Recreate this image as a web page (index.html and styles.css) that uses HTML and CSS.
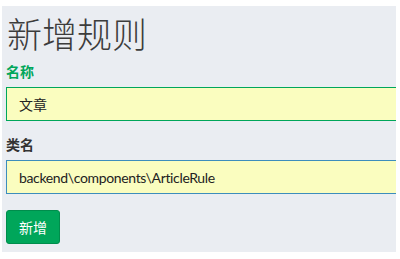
FILE: index.html
```html
<!DOCTYPE html>
<html lang="zh">
<head>
<meta charset="utf-8">
<title>新增规则</title>
<link rel="stylesheet" href="styles.css">
</head>
<body>
<div class="panel">
  <h1 class="title">新增规则</h1>
  <form class="form">
    <div class="group group-success">
      <label class="label">名称</label>
      <div class="input">文章</div>
    </div>
    <div class="group group-focus">
      <label class="label">类名</label>
      <div class="input input-latin">backend\components\ArticleRule</div>
    </div>
    <div class="actions">
      <button type="button" class="btn">新增</button>
    </div>
  </form>
</div>
</body>
</html>
```

FILE: styles.css
```css
html, body {
  margin: 0;
  padding: 0;
  background: #ffffff;
}
body {
  font-family: Lato, "Noto Sans CJK SC", sans-serif;
  font-size: 14px;
  color: #333;
}
.panel {
  margin: 6px 4px 0 2px;
  height: 246px;
  box-sizing: border-box;
  background: #eaedf2;
  padding: 0 0 0 4px;
  overflow: hidden;
  display: flex;
  flex-direction: column;
}
.title {
  margin: 7px 0 0 1px;
  font-family: "Noto Sans CJK SC", sans-serif;
  font-weight: 300;
  font-size: 35px;
  line-height: 40px;
  color: #3c3c3c;
}
.form {
  display: flex;
  flex-direction: column;
  margin-top: 8px;
}
.group {
  display: flex;
  flex-direction: column;
  margin-bottom: 13px;
}
.label {
  font-family: "Noto Sans CJK SC", sans-serif;
  font-weight: 700;
  font-size: 14px;
  line-height: 20px;
  margin-bottom: 6px;
  color: #333;
}
.group-success .label {
  color: #00a65a;
}
.input {
  height: 34px;
  box-sizing: border-box;
  width: 400px;
  border: 1px solid #00a65a;
  border-right: none;
  background: #fafdbf;
  padding: 0 12px;
  display: flex;
  align-items: center;
  font-size: 14px;
  color: #222;
}
.input-latin {
  letter-spacing: -0.35px;
}
.group-focus .input {
  border-color: #3c8dbc;
}
.group-focus {
  margin-bottom: 16px;
}
.actions {
  display: flex;
}
.btn {
  width: 54px;
  height: 34px;
  border: 1px solid #008d4c;
  border-radius: 3px;
  background: #00a65a;
  color: #fff;
  font-family: "Noto Sans CJK SC", sans-serif;
  font-size: 14px;
  padding: 0;
}
```
